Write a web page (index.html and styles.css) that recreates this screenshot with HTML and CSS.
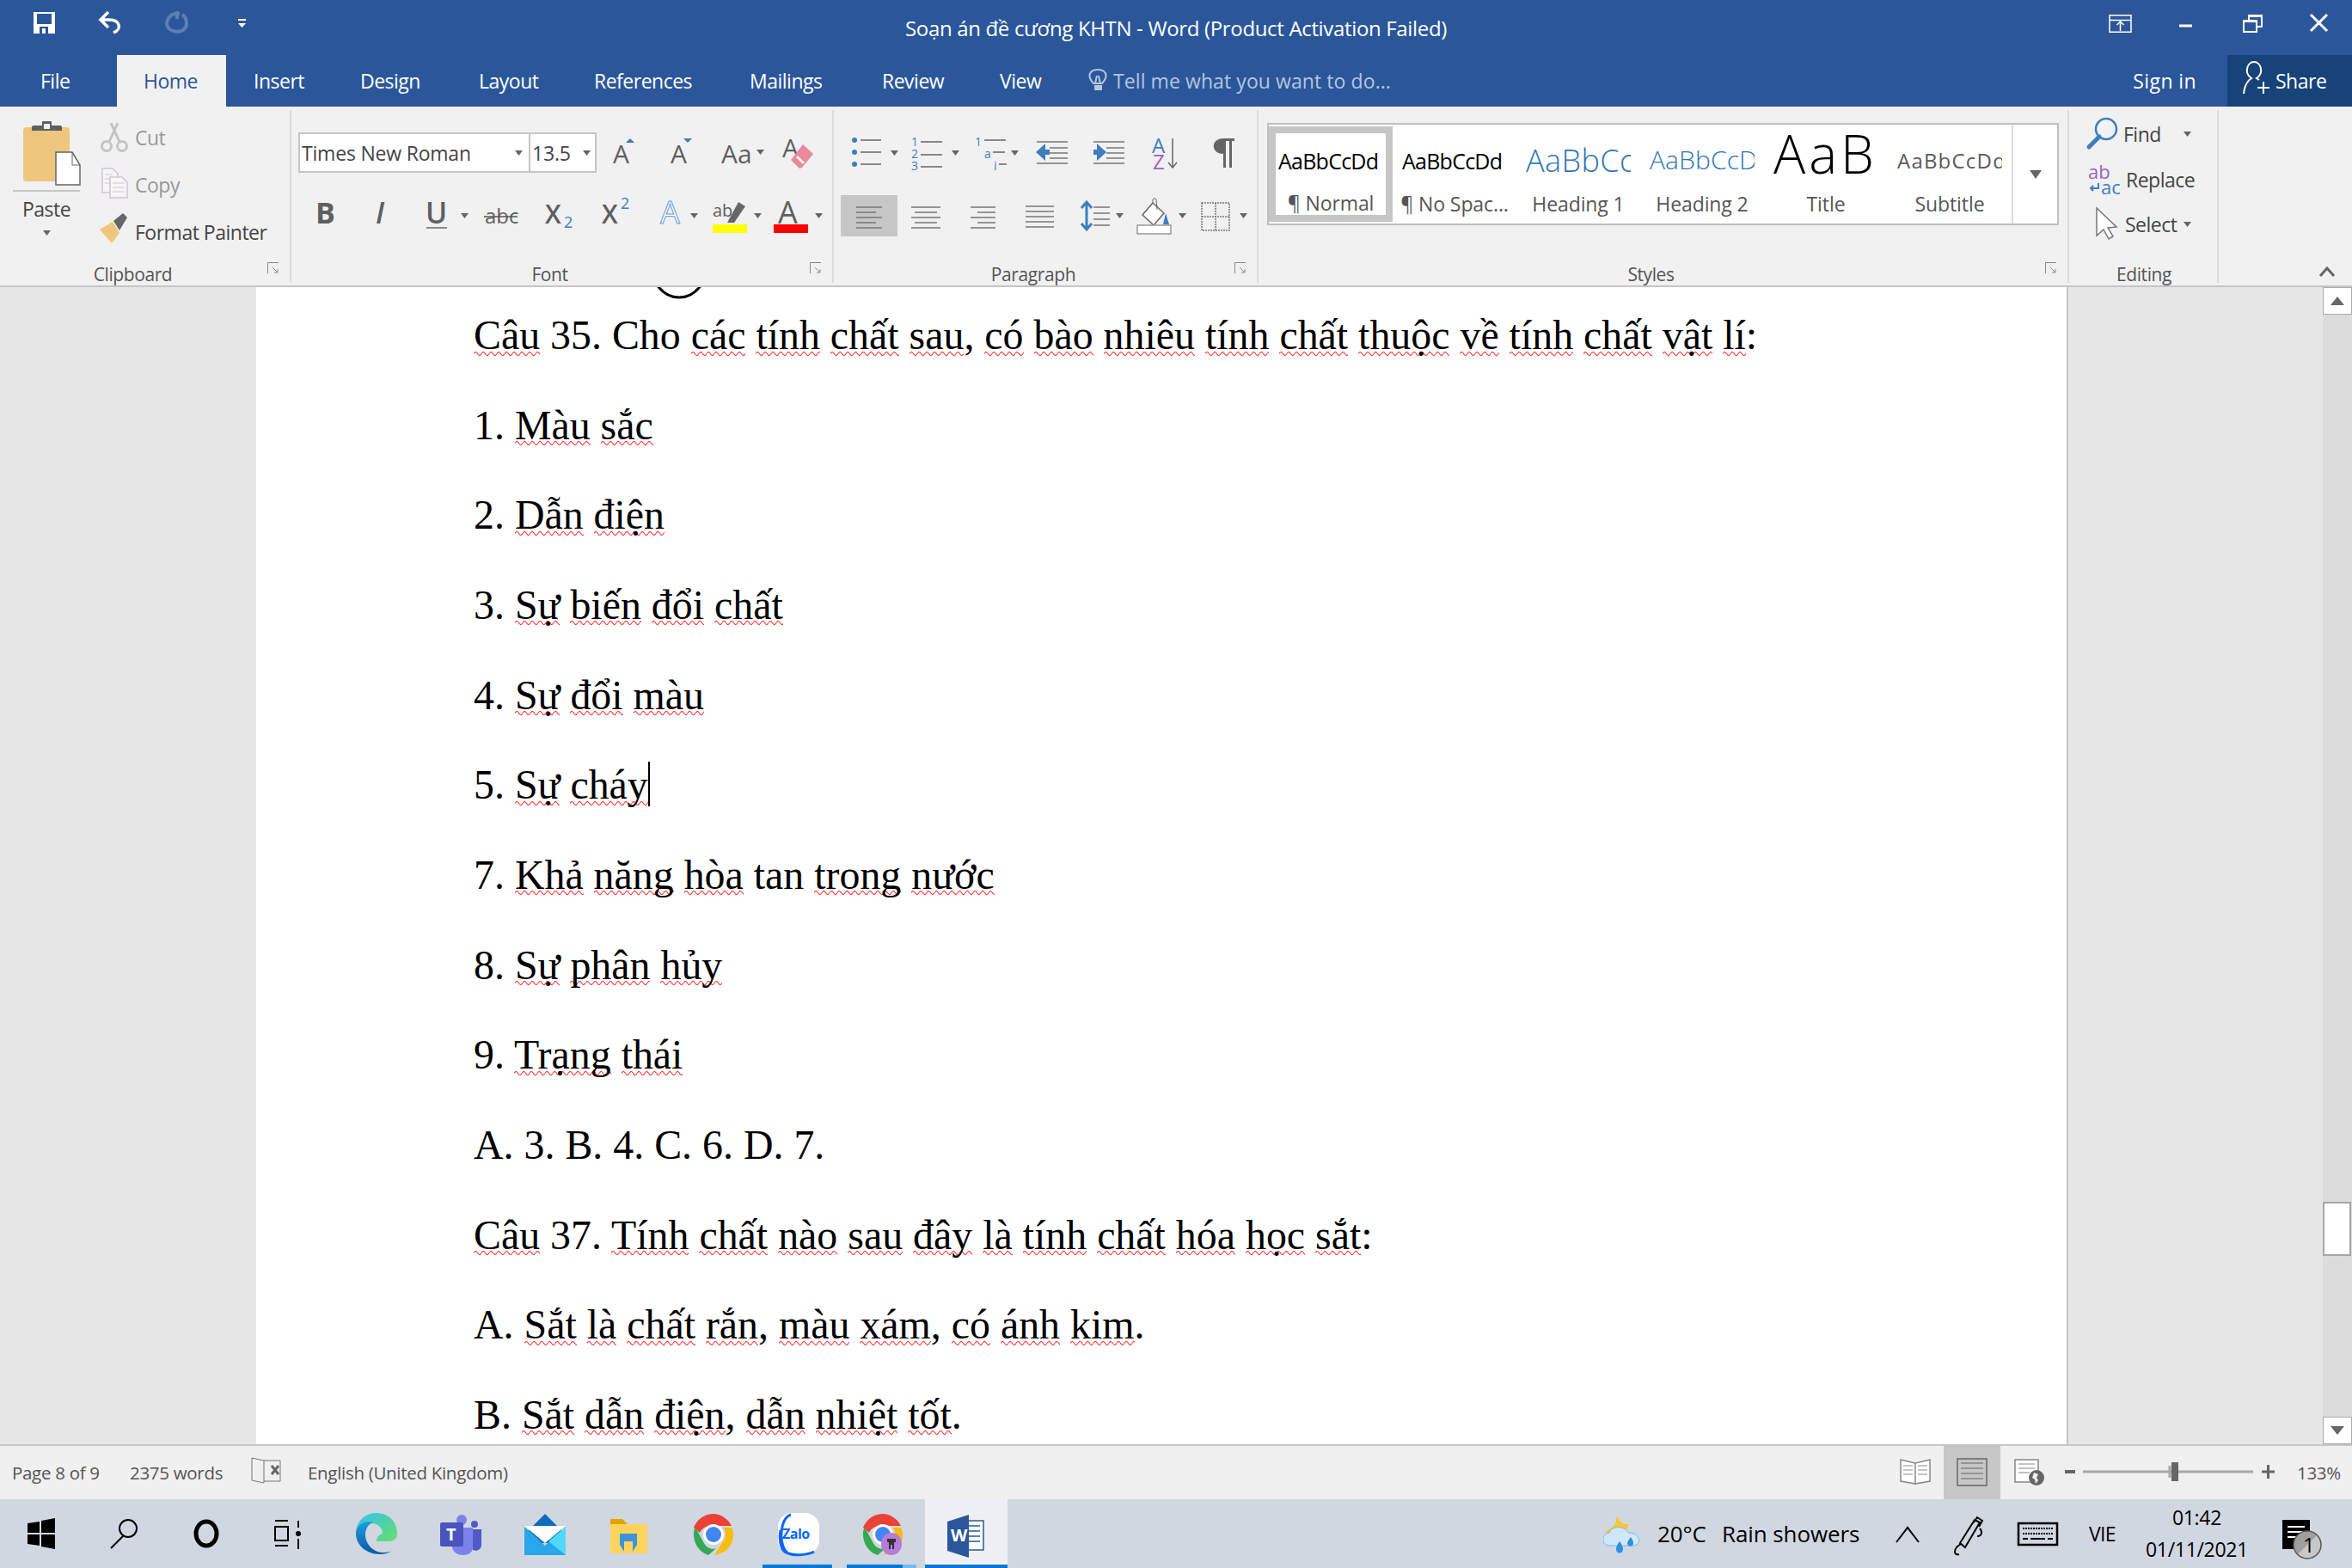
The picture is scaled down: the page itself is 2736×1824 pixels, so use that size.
FILE: index.html
```html
<!DOCTYPE html>
<html lang="vi">
<head>
<meta charset="utf-8">
<title>Soạn án đề cương KHTN - Word</title>
<link rel="stylesheet" href="styles.css">
</head>
<body>
<div class="app">
  <header class="titlebar">
    <div class="qat">
      <svg width="90" height="64" viewBox="0 0 90 64"><path fill="#fff" fill-rule="evenodd" d="M39 14h25v25H39zM43 16v12h17V16zM46 31v8h3v-6h4v6h3v-8z"/></svg>
      <svg width="64" height="64" viewBox="90 0 64 64"><path fill="none" stroke="#fff" stroke-width="3.5" d="M126 14l-9 9 9 9M118 23h9c13 0 15 11 5 15"/></svg>
      <svg width="78" height="64" viewBox="154 0 78 64"><path fill="none" stroke="#5b7fb7" stroke-width="4" d="M209 16c-13-2-15 10-15 11 0 12 23 14 23 0 0-5-2-8-5-10M206 13v9"/></svg>
      <svg width="60" height="64" viewBox="232 0 60 64"><path fill="#fff" d="M277 22h9v2h-9zM277 27h9l-4.500 5z"/></svg>
    </div>
    <div class="doc-title">Soạn án đề cương KHTN - Word (Product Activation Failed)</div>
    <div class="winctl">
      <svg width="82" height="64" viewBox="2432 0 82 64"><path fill="none" stroke="#fff" stroke-width="1.500" d="M2454 17.700h25v19.600h-25zM2454 23.500h25M2466.500 36v-11M2462.500 29l4-4 4 4"/></svg>
      <svg width="72" height="64" viewBox="2514 0 72 64"><path fill="#fff" d="M2535 28.500h15v3h-15z"/></svg>
      <svg width="72" height="64" viewBox="2586 0 72 64"><path fill="none" stroke="#fff" stroke-width="2" d="M2610 24h15v13h-15zM2616 23v-5h15v13h-5"/><path fill="#fff" d="M2610 23h15v3h-15zM2616 17h15v3h-15z"/></svg>
      <svg width="78" height="64" viewBox="2658 0 78 64"><path fill="none" stroke="#fff" stroke-width="3" d="M2688 17l19 19M2707 17l-19 19"/></svg>
    </div>
  </header>

  <nav class="tabs">
    <span class="tab tab-file">File</span>
    <span class="tab tab-home">Home</span>
    <span class="tab">Insert</span>
    <span class="tab">Design</span>
    <span class="tab">Layout</span>
    <span class="tab">References</span>
    <span class="tab">Mailings</span>
    <span class="tab">Review</span>
    <span class="tab">View</span>
    <span class="tell">
      <svg width="29" height="60" viewBox="1262 64 29 60"><path fill="none" stroke="#b5c6df" stroke-width="2" d="M1269 97c-9-10-3-16 5-16s14 6 5 16zM1271 97l2-9M1277 97l-2-9"/><path fill="#b5c6df" d="M1270 99h9v6h-9z"/></svg>
      <span class="tell-text">Tell me what you want to do...</span>
    </span>
    <span class="signin">Sign in</span>
    <span class="share">
      <svg width="56" height="60" viewBox="2591 64 56 60"><path fill="none" stroke="#fff" stroke-width="2" d="M2610 109c1-10 4-15 9-18-9-6-5-19 3-19s12 13 3 19l3 2M2626 102h14M2633 95v14"/></svg>
      <span>Share</span>
    </span>
  </nav>

  <section class="ribbon">
    <div class="group g-clip">
      <div class="body clip-body">
        <div class="paste">
          <svg width="108" height="108" viewBox="0 124 108 108">
            <rect x="27" y="148" width="54" height="63" rx="4" fill="#eec67e"/>
            <path fill="#5f5f5f" d="M37 152h35v-4q0-2-2-2H60v-4q0-1-1-1h-9q-1 0-1 1v4H39q-2 0-2 2z"/>
            <rect x="51" y="144" width="7" height="6" fill="#f1f1f1"/>
            <path fill="#fff" stroke="#666" stroke-width="1.500" d="M65 177h19l9 15v23H65z"/>
            <path fill="none" stroke="#666" d="M84 177v15h9"/>
            <path stroke="#c6c6c6" stroke-width="2" d="M15 222h78"/>
          </svg>
          <span class="paste-label">Paste</span>
          <svg width="108" height="14" viewBox="0 266 108 14"><path fill="#666" d="M50 270h9l-4.500 6z"/></svg>
        </div>
        <div class="clip-list">
          <div class="mini muted">
            <svg width="49" height="55" viewBox="108 134 49 55"><g fill="none" stroke="#c4c4c4" stroke-width="3"><circle cx="124" cy="170" r="5.500"/><circle cx="142" cy="170" r="5.500"/><path d="M127 165l10-22M139 165l-10-22"/></g></svg>
            <span>Cut</span>
          </div>
          <div class="mini muted">
            <svg width="49" height="55" viewBox="108 189 49 55"><g fill="#f6f6f6" stroke="#cfc6d2" stroke-width="1.500"><path d="M119 196h12l6 6v22h-18z"/><path d="M128 206h14l6 6v18h-20z"/></g><path stroke="#cfc6d2" d="M122 203h9M122 208h6M122 213h6M131 213h14M131 218h14M131 223h14"/></svg>
            <span>Copy</span>
          </div>
          <div class="mini">
            <svg width="49" height="55" viewBox="108 244 49 55"><path fill="#eec67e" d="M116 267l15-9 8 13-9 12z"/><path fill="#666" d="M132 257l11-9 5 5-9 15z"/></svg>
            <span>Format Painter</span>
          </div>
        </div>
      </div>
      <div class="glabel">Clipboard<svg class="launch" width="14" height="14" viewBox="0 0 14 14"><path fill="none" stroke="#888" d="M.5 13V.5H13M6 6l6 6M12 8v4H8"/></svg></div>
    </div>

    <div class="group g-font">
      <div class="body font-body">
        <div class="irow">
          <div class="fontbox">
            <div class="combo combo-name"><span>Times New Roman</span><svg width="12" height="8" viewBox="0 0 12 8"><path fill="#666" d="M1 1h9l-4.500 6z"/></svg></div>
            <div class="combo combo-size"><span>13.5</span><svg width="12" height="8" viewBox="0 0 12 8"><path fill="#666" d="M1 1h9l-4.500 6z"/></svg></div>
          </div>
          <svg width="65" height="47" viewBox="694 154 65 47"><text x="713" y="190" class="g g30">A</text><path fill="#3f7dbf" d="M733 161l-5 5h10z"/></svg>
          <svg width="64" height="47" viewBox="759 154 64 47"><text x="780" y="190" class="g g30">A</text><path fill="#3f7dbf" d="M795 161h10l-5 5z"/></svg>
          <svg width="76" height="47" viewBox="823 154 76 47"><text x="839" y="190" class="g g30">Aa</text><path fill="#666" d="M880 174h9l-4.500 6z"/></svg>
          <svg width="60" height="47" viewBox="899 154 60 47"><text x="910" y="183" class="g g30">A</text><path fill="#e88a9b" d="M934 168l12 11-13 16-3 1-10-10z"/><path fill="#f1f1f1" d="M926 183l2-2 8 8-2 2z"/></svg>
        </div>
        <div class="irow irow2">
          <svg width="60" height="50" viewBox="347 227 60 50"><text x="367" y="260" class="g g34 bold">B</text></svg>
          <svg width="65" height="50" viewBox="407 227 65 50"><text x="437" y="260" class="g g34 ital semi">I</text></svg>
          <svg width="82" height="50" viewBox="472 227 82 50"><text x="495" y="260" class="g g34 semi">U</text><path stroke="#666" stroke-width="1.500" d="M496 265h24"/><path fill="#666" d="M536 248h9l-4.500 6z"/></svg>
          <svg width="70" height="50" viewBox="554 227 70 50"><text x="564" y="260" class="g g24">abc</text><path stroke="#555" stroke-width="1.500" d="M563 252h39"/></svg>
          <svg width="66" height="50" viewBox="624 227 66 50"><text x="634" y="260" class="g g30 semi">X</text><text x="656" y="265" class="g g18 blue">2</text></svg>
          <svg width="65" height="50" viewBox="690 227 65 50"><text x="700" y="260" class="g g30 semi">X</text><text x="722" y="243" class="g g18 blue">2</text></svg>
          <svg width="64" height="50" viewBox="755 227 64 50"><text x="768" y="260" class="g g36 outline">A</text><path fill="#666" d="M803 248h9l-4.500 6z"/></svg>
          <svg width="70" height="50" viewBox="819 227 70 50"><text x="829" y="252" class="g g20">ab</text><path fill="#666" d="M859 235l8 5-13 19h-8z"/><rect x="829" y="261" width="40" height="10" fill="#ff0"/><path fill="#666" d="M877 248h9l-4.500 6z"/></svg>
          <svg width="70" height="50" viewBox="889 227 70 50"><text x="905" y="260" class="g g36">A</text><rect x="900" y="261" width="40" height="10" fill="#f00"/><path fill="#666" d="M948 248h9l-4.500 6z"/></svg>
        </div>
      </div>
      <div class="glabel">Font<svg class="launch" width="14" height="14" viewBox="0 0 14 14"><path fill="none" stroke="#888" d="M.5 13V.5H13M6 6l6 6M12 8v4H8"/></svg></div>
    </div>

    <div class="group g-para">
      <div class="body para-body">
        <div class="irow">
          <svg width="81" height="47" viewBox="970 154 81 47"><g fill="#3f7dbf"><circle cx="994" cy="163" r="3"/><circle cx="994" cy="177" r="3"/><circle cx="994" cy="191" r="3"/></g><path stroke="#666" stroke-width="1.500" d="M1001 163h24M1001 177h24M1001 191h24"/><path fill="#666" d="M1036 175h9l-4.500 6z"/></svg>
          <svg width="70" height="47" viewBox="1051 154 70 47"><text x="1060" y="170" class="g g14 blue">1</text><text x="1060" y="184" class="g g14 blue">2</text><text x="1060" y="198" class="g g14 blue">3</text><path stroke="#666" stroke-width="1.500" d="M1071 165h25M1071 180h25M1071 194h25"/><path fill="#666" d="M1107 175h9l-4.500 6z"/></svg>
          <svg width="67" height="47" viewBox="1121 154 67 47"><text x="1134" y="170" class="g g14 blue">1</text><text x="1145" y="184" class="g g14 blue">a</text><text x="1156" y="198" class="g g14 blue">i</text><path stroke="#666" stroke-width="1.500" d="M1145 163h25M1155 177h14M1162 191h9"/><path fill="#666" d="M1176 175h9l-4.500 6z"/></svg>
          <svg width="62" height="47" viewBox="1188 154 62 47"><path stroke="#777" stroke-width="1.500" d="M1206 165h36M1221 172h21M1221 178h21M1221 184h21M1206 190h36"/><path fill="#3f7dbf" d="M1205 177l11-10v7h5v6h-5v7z"/></svg>
          <svg width="66" height="47" viewBox="1250 154 66 47"><path stroke="#777" stroke-width="1.500" d="M1272 165h36M1287 172h21M1287 178h21M1287 184h21M1272 190h36"/><path fill="#3f7dbf" d="M1287 177l-11-10v7h-4v6h4v7z"/></svg>
          <svg width="62" height="47" viewBox="1316 154 62 47"><text x="1340" y="178" class="g g24 blue">A</text><text x="1341" y="197" class="g g24 purple">Z</text><path fill="none" stroke="#666" stroke-width="1.500" d="M1364 161v34M1359 189l5 6 5-6"/></svg>
          <svg width="85" height="47" viewBox="1378 154 85 47"><path fill="#666" d="M1423 161h13v3h-3v31h-3v-31h-4v31h-3z"/><path fill="#666" d="M1423 161c-15 0-15 18 0 18z"/></svg>
        </div>
        <div class="irow irow2b">
          <svg class="pick" width="66" height="48" viewBox="978 227 66 48"><path stroke="#777" stroke-width="1.500" d="M996 241h30M996 247h23M996 253h30M996 259h23M996 265h30"/></svg>
          <svg width="68" height="48" viewBox="1044 227 68 48"><path stroke="#777" stroke-width="1.500" d="M1060 241h34M1064 247h26M1060 253h34M1064 259h26M1060 265h34"/></svg>
          <svg width="64" height="48" viewBox="1112 227 64 48"><path stroke="#777" stroke-width="1.500" d="M1129 241h29M1137 247h21M1129 253h29M1137 259h21M1129 265h29"/></svg>
          <svg width="64" height="48" viewBox="1176 227 64 48"><path stroke="#777" stroke-width="1.500" d="M1193 240h33M1193 246h33M1193 252h33M1193 258h33M1193 264h33"/></svg>
          <svg width="76" height="48" viewBox="1240 227 76 48"><path stroke="#3f7dbf" stroke-width="3" fill="none" d="M1264 236v30M1258 242l6-7 6 7M1258 260l6 7 6-7"/><path stroke="#777" stroke-width="1.500" d="M1272 241h19M1272 248h19M1272 255h19M1272 262h19"/><path fill="#666" d="M1298 248h9l-4.500 6z"/></svg>
          <svg width="74" height="48" viewBox="1316 227 74 48"><path fill="#fff" stroke="#666" stroke-width="1.500" d="M1341 236l-12 14 13 12 12-14z"/><path fill="none" stroke="#666" d="M1341 236v-4q2-3 4 0l1 12"/><path fill="#3f7dbf" d="M1356 248l4 13h-7z"/><rect x="1323" y="262" width="39" height="10" fill="#fff" stroke="#999" stroke-width="1.500"/><path fill="#666" d="M1371 248h9l-4.500 6z"/></svg>
          <svg width="73" height="48" viewBox="1390 227 73 48"><path fill="none" stroke="#777" stroke-width="1.500" stroke-dasharray="2 1" d="M1398 236h32v32h-32zM1398 252h32M1414 236v32"/><path fill="#666" d="M1442 248h9l-4.500 6z"/></svg>
        </div>
      </div>
      <div class="glabel">Paragraph<svg class="launch" width="14" height="14" viewBox="0 0 14 14"><path fill="none" stroke="#888" d="M.5 13V.5H13M6 6l6 6M12 8v4H8"/></svg></div>
    </div>

    <div class="group g-styles">
      <div class="body styles-body">
        <div class="gallery">
          <div class="style style-on"><div class="sample s-norm">AaBbCcDd</div><div class="slabel">¶ Normal</div></div>
          <div class="style"><div class="sample s-norm">AaBbCcDd</div><div class="slabel">¶ No Spac...</div></div>
          <div class="style"><div class="sample s-h1">AaBbCcDd</div><div class="slabel">Heading 1</div></div>
          <div class="style"><div class="sample s-h2">AaBbCcDd</div><div class="slabel">Heading 2</div></div>
          <div class="style"><div class="sample s-title">AaBbCcDd</div><div class="slabel">Title</div></div>
          <div class="style"><div class="sample s-sub">AaBbCcDd</div><div class="slabel">Subtitle</div></div>
          <div class="gmore"><svg width="14" height="12" viewBox="0 0 14 12"><path fill="#666" d="M0 1h14l-7 10z"/></svg></div>
        </div>
      </div>
      <div class="glabel">Styles<svg class="launch" width="14" height="14" viewBox="0 0 14 14"><path fill="none" stroke="#888" d="M.5 13V.5H13M6 6l6 6M12 8v4H8"/></svg></div>
    </div>

    <div class="group g-edit">
      <div class="body edit-body">
        <div class="mini edit-row">
          <svg width="63" height="52" viewBox="2407 131 63 52"><circle cx="2450" cy="151" r="12" fill="none" stroke="#3f7dbf" stroke-width="2.500"/><path stroke="#3f7dbf" stroke-width="5" stroke-linecap="round" d="M2442 160l-12 12"/></svg>
          <span>Find</span>
          <svg class="edit-arrow" width="10" height="8" viewBox="0 0 10 8"><path fill="#666" d="M0 1h9L4.500 7z"/></svg>
        </div>
        <div class="mini edit-row">
          <svg width="66" height="52" viewBox="2407 183 66 52"><text x="2429" y="208" class="g g22 purple">ab</text><text x="2444" y="226" class="g g22 blue">ac</text><path fill="none" stroke="#3f7dbf" stroke-width="2" d="M2441 213v6h-9M2435 216l-3 3 3 3"/></svg>
          <span>Replace</span>
        </div>
        <div class="mini edit-row">
          <svg width="65" height="52" viewBox="2407 236 65 52"><path fill="#fff" stroke="#777" stroke-width="1.500" d="M2439 243v32l8-7 6 11 5-3-6-10 10-1z"/></svg>
          <span>Select</span>
          <svg class="select-arrow" width="10" height="8" viewBox="0 0 10 8"><path fill="#666" d="M0 1h9L4.500 7z"/></svg>
        </div>
      </div>
      <div class="glabel glabel-plain">Editing</div>
    </div>

    <div class="collapse"><svg width="20" height="14" viewBox="0 0 20 14"><path fill="none" stroke="#666" stroke-width="3" d="M2 12l8-9 8 9"/></svg></div>
  </section>

  <main class="workspace">
    <div class="gutter gutter-left"></div>
    <article class="page">
      <svg class="inline-shape" width="90" height="14" viewBox="0 0 90 14"><ellipse cx="45" cy="-30" rx="34" ry="42" fill="none" stroke="#000" stroke-width="3"/></svg>
      <p><span class="sp">Câu</span> 35. Cho <span class="sp">các</span> <span class="sp">tính</span> <span class="sp">chất</span> <span class="sp">sau</span>, <span class="sp">có</span> <span class="sp">bào</span> <span class="sp">nhiêu</span> <span class="sp">tính</span> <span class="sp">chất</span> <span class="sp">thuộc</span> <span class="sp">về</span> <span class="sp">tính</span> <span class="sp">chất</span> <span class="sp">vật</span> <span class="sp">lí</span>:</p>
      <p>1. <span class="sp">Màu</span> <span class="sp">sắc</span></p>
      <p>2. <span class="sp">Dẫn</span> <span class="sp">điện</span></p>
      <p>3. <span class="sp">Sự</span> <span class="sp">biến</span> <span class="sp">đổi</span> <span class="sp">chất</span></p>
      <p>4. <span class="sp">Sự</span> <span class="sp">đổi</span> <span class="sp">màu</span></p>
      <p>5. <span class="sp">Sự</span> <span class="sp">cháy</span><span class="caret"></span></p>
      <p>7. <span class="sp">Khả</span> <span class="sp">năng</span> <span class="sp">hòa</span> tan <span class="sp">trong</span> <span class="sp">nước</span></p>
      <p>8. <span class="sp">Sự</span> <span class="sp">phân</span> <span class="sp">hủy</span></p>
      <p>9. <span class="sp">Trạng</span> <span class="sp">thái</span></p>
      <p>A. 3. B. 4. C. 6. D. 7.</p>
      <p><span class="sp">Câu</span> 37. <span class="sp">Tính</span> <span class="sp">chất</span> <span class="sp">nào</span> <span class="sp">sau</span> <span class="sp">đây</span> <span class="sp">là</span> <span class="sp">tính</span> <span class="sp">chất</span> <span class="sp">hóa</span> <span class="sp">học</span> <span class="sp">sắt</span>:</p>
      <p>A. <span class="sp">Sắt</span> <span class="sp">là</span> <span class="sp">chất</span> <span class="sp">rắn</span>, <span class="sp">màu</span> <span class="sp">xám</span>, <span class="sp">có</span> <span class="sp">ánh</span> <span class="sp">kim</span>.</p>
      <p>B. <span class="sp">Sắt</span> <span class="sp">dẫn</span> <span class="sp">điện</span>, <span class="sp">dẫn</span> <span class="sp">nhiệt</span> <span class="sp">tốt</span>.</p>
    </article>
    <div class="gutter gutter-right"></div>
    <aside class="scrollbar">
      <div class="sbtn"><svg width="18" height="12" viewBox="0 0 18 12"><path fill="#666" d="M9 1l8 10H1z"/></svg></div>
      <div class="strack"><div class="sthumb"></div></div>
      <div class="sbtn"><svg width="18" height="12" viewBox="0 0 18 12"><path fill="#666" d="M1 1h16L9 11z"/></svg></div>
    </aside>
  </main>

  <footer class="status">
    <span class="st st-page">Page 8 of 9</span>
    <span class="st st-words">2375 words</span>
    <svg width="50" height="62" viewBox="283 1682 50 62"><path fill="none" stroke="#777" d="M293 1696l14 3v26l-14-3zM307 1699h19v24h-19"/><path stroke="#666" stroke-width="3" d="M316 1705l8 10M324 1705l-8 10"/></svg>
    <span class="st st-lang">English (United Kingdom)</span>
    <div class="views">
      <svg width="64" height="62" viewBox="2197 1682 64 62"><path fill="#fff" stroke="#888" stroke-width="1.500" d="M2228 1702v24l-17-3v-25zM2228 1702v24l17-3v-25z"/><path stroke="#888" d="M2214 1705h11M2214 1710h11M2214 1715h11M2231 1705h11M2231 1710h11M2231 1715h11"/></svg>
      <svg class="view-on" width="66" height="62" viewBox="2261 1682 66 62"><rect x="2277" y="1697" width="34" height="31" fill="none" stroke="#666" stroke-width="1.500"/><path stroke="#666" d="M2281 1702h26M2281 1708h26M2281 1714h26M2281 1720h26"/></svg>
      <svg width="63" height="62" viewBox="2327 1682 63 62"><path fill="#fff" stroke="#888" stroke-width="1.500" d="M2344 1698h27v26h-27z"/><path stroke="#888" d="M2348 1703h19M2348 1708h19M2348 1713h13"/><circle cx="2369" cy="1719" r="9" fill="#666"/><path fill="#f0f0f0" d="M2366 1713l5 2-2 4 2 3-3 4-1-5-3-2z"/></svg>
      <svg width="270" height="62" viewBox="2390 1682 270 62"><path fill="#666" d="M2402 1710h12v4h-12zM2631 1710.500h15v3h-15zM2637 1704h3v16h-3z"/><path stroke="#a8a8a8" stroke-width="3" d="M2423 1712h198M2524 1705v14"/><rect x="2526" y="1701" width="8" height="22" fill="#666"/></svg>
      <span class="st st-zoom">133%</span>
    </div>
  </footer>

  <footer class="taskbar">
    <svg width="96" height="80" viewBox="0 1744 96 80"><path fill="#000" d="M32 1772l14-2v13H32zM48 1769l16-3v17H48zM32 1785h14v13l-14-2zM48 1785h16v17l-16-3z"/></svg>
    <svg width="96" height="80" viewBox="96 1744 96 80"><circle cx="149" cy="1778" r="10" fill="none" stroke="#000" stroke-width="2"/><path stroke="#000" stroke-width="2" d="M143 1787l-14 14"/></svg>
    <svg width="96" height="80" viewBox="192 1744 96 80"><ellipse cx="240" cy="1784" rx="12" ry="14" fill="none" stroke="#000" stroke-width="5"/></svg>
    <svg width="96" height="80" viewBox="288 1744 96 80"><path fill="none" stroke="#000" stroke-width="2" d="M320 1769h15M320 1776h15v16h-15zM320 1798h15M347 1769v8M347 1790v12"/><circle cx="347" cy="1784" r="3"/></svg>
    <svg width="102" height="80" viewBox="384 1744 102 80">
      <defs><linearGradient id="edgeA" x1="0" y1="0" x2="1" y2="1"><stop offset="0" stop-color="#35c1f1"/><stop offset="1" stop-color="#66e06a"/></linearGradient><linearGradient id="edgeB" x1="0" y1="0" x2="0" y2="1"><stop offset="0" stop-color="#1b9de2"/><stop offset="1" stop-color="#0c59a4"/></linearGradient></defs>
      <path fill="url(#edgeA)" d="M414 1784c0-14 10-24 24-24 15 0 24 11 24 24 0 6-4 9-10 9h-14c0-5 3-8 7-9 0-7-6-12-13-12-8 0-18 5-18 12z"/>
      <path fill="url(#edgeB)" d="M414 1784c0-9 8-14 16-14 4 0 4 1 4 1-6 2-9 8-9 14 0 11 9 21 21 21 5 0 9-1 11-3-5 4-10 5-15 5-16 0-28-11-28-24z"/>
    </svg>
    <svg width="99" height="80" viewBox="486 1744 99 80">
      <circle cx="537" cy="1768" r="6" fill="#7b83eb"/><circle cx="552" cy="1773" r="4" fill="#5059c9"/>
      <path fill="#5059c9" d="M544 1779h16v18c0 6-6 8-10 6z"/><path fill="#7b83eb" d="M526 1777h24v23c0 12-22 12-24 0z"/>
      <rect x="512" y="1771" width="27" height="28" rx="2" fill="#4b53bc"/><text x="519" y="1792" class="tk-t">T</text>
    </svg>
    <svg width="98" height="80" viewBox="585 1744 98 80">
      <path fill="#0f6cbd" d="M634 1761l24 24v10h-48v-10z"/><path fill="#fff" d="M610 1775h48l-24 20z"/><path fill="#28a8ea" d="M610 1776l24 22 24-22v33h-48z"/><path fill="#50d9ff" d="M658 1776v33l-20-16z"/>
    </svg>
    <svg width="98" height="80" viewBox="683 1744 98 80">
      <path fill="#e2a300" d="M710 1767h14l6 6v12h-20z"/><path fill="#ffd45c" d="M710 1773h43v34h-43z"/><path fill="#3c94dc" d="M721 1797v-13h20v13l-5 8v-12h-10v12z"/>
    </svg>
    <svg width="100" height="80" viewBox="781 1744 100 80">
      <path fill="#ea4335" d="M830 1761c9 0 18 7 21 14h-23c-7 0-12 3-14 8l-7-6c4-10 13-16 23-16z"/><path fill="#34a853" d="M807 1785c0-3 0-6 2-8l11 20c3 4 9 6 13 4l-9 8c-10-3-17-13-17-24z"/><path fill="#fbbc05" d="M853 1785c0 12-7 21-22 24l12-19c2-5 1-10-2-13h10c1 2 2 5 2 8z"/><circle cx="830" cy="1785" r="12" fill="#fff"/><circle cx="830" cy="1785" r="9" fill="#4285f4"/>
    </svg>
    <svg width="95" height="80" viewBox="881 1744 95 80">
      <rect x="905" y="1760" width="48" height="48" rx="16" fill="#fff"/><path fill="none" stroke="#0068ff" stroke-width="3" d="M920 1762c-14 4-14 38-4 44M908 1780c-2 10 0 26 9 27 8 3 22 2 30-2"/><text x="910" y="1790" class="tk-z">Zalo</text>
      <rect x="887" y="1820" width="81" height="4" fill="#0078d7"/>
    </svg>
    <svg width="100" height="80" viewBox="976 1744 100 80">
      <path fill="#ea4335" d="M1027 1761c9 0 18 7 21 14h-23c-7 0-12 3-14 8l-7-6c4-10 13-16 23-16z"/><path fill="#34a853" d="M1004 1785c0-3 0-6 2-8l11 20c3 4 9 6 13 4l-9 8c-10-3-17-13-17-24z"/><path fill="#fbbc05" d="M1050 1785c0 12-7 21-22 24l12-19c2-5 1-10-2-13h10c1 2 2 5 2 8z"/><circle cx="1027" cy="1785" r="12" fill="#fff"/><circle cx="1027" cy="1785" r="9" fill="#4285f4"/>
      <ellipse cx="1037" cy="1796" rx="12" ry="13" fill="#b67cd8"/><path fill="#333" d="M1032 1790h10v4h-2v8h-2v-5h-2v5h-2v-8h-2z"/><rect x="985" y="1820" width="65" height="4" fill="#0078d7"/><rect x="1050" y="1820" width="16" height="4" fill="#76b9ed"/>
    </svg>
    <svg class="task-on" width="96" height="80" viewBox="1076 1744 96 80">
      <path fill="#fff" stroke="#2b579a" stroke-width="1.500" d="M1118 1769h26v34h-26z"/><path stroke="#2b579a" stroke-width="1.500" d="M1124 1775h16M1124 1781h16M1124 1787h16M1124 1793h16"/><path fill="#2b579a" d="M1102 1770l25-8v50l-25-8z"/><text x="1106" y="1793" class="tk-w">W</text>
      <rect x="1076" y="1820" width="96" height="4" fill="#0078d7"/>
    </svg>
    <div class="tray">
      <svg width="63" height="80" viewBox="1865 1744 63 80"><path fill="#f7c52e" d="M1881 1762c-1 12-3 14-14 20 8 6 26 2 28-9-7 1-13-3-14-11z"/><path fill="#cfe7fb" stroke="#7db7e8" d="M1872 1798c-10-1-9-14 0-15 3-9 19-8 22 0 15 0 17 15 5 15z"/><path fill="#2f8fdc" d="M1884 1793c3 4 4 7 4 9 0 6-8 6-8 0 0-2 1-5 4-9zM1897 1788c2 3 3 5 3 7 0 5-7 5-7 0 0-2 2-4 4-7z"/></svg>
      <span class="temp">20°C</span>
      <span class="wx">Rain showers</span>
      <svg width="79" height="80" viewBox="2179 1744 79 80"><path fill="none" stroke="#000" stroke-width="2" d="M2206 1794l13-17 13 17"/></svg>
      <svg width="68" height="80" viewBox="2258 1744 68 80"><path fill="none" stroke="#000" stroke-width="2" d="M2286 1800l-6-5 17-27 6 3zM2295 1772l5-7 6 4-4 7M2281 1796c-10 6-8 14-2 12M2303 1778c3 3 3 9-3 9"/></svg>
      <svg width="86" height="80" viewBox="2326 1744 86 80"><rect x="2348" y="1772" width="45" height="25" fill="none" stroke="#000" stroke-width="2.500"/><path stroke="#000" stroke-width="2" stroke-dasharray="2 1" d="M2353 1778h35M2353 1784h35"/><path stroke="#000" stroke-width="2" d="M2353 1790h6M2362 1790h17M2382 1790h6"/></svg>
      <span class="lang">VIE</span>
      <div class="clock"><span>01:42</span><span>01/11/2021</span></div>
      <svg width="120" height="80" viewBox="2616 1744 120 80"><path fill="#000" d="M2655 1768h32v34h-32z"/><path stroke="#fff" stroke-width="2" d="M2661 1776h20M2661 1782h20M2661 1788h14"/><circle cx="2684" cy="1797" r="16" fill="#c7c7c7" stroke="#555" stroke-width="1.500"/><path fill="#555" d="M2673 1786a16 16 0 0 1 22 0l-22 22a16 16 0 0 1 0-22z" opacity=".35"/><text x="2679" y="1806" class="tk-n">1</text></svg>
    </div>
  </footer>
</div>
</body>
</html>
```
FILE: styles.css
```css
* { box-sizing: border-box; }
html { height: 1824px; overflow: hidden; }
html, body { margin: 0; padding: 0; }
body { width: 2736px; height: 1824px; overflow: hidden; font-family: "Open Sans", "Noto Sans", sans-serif; color: #444; }
svg { display: block; flex: none; }
.app { display: flex; flex-direction: column; height: 1824px; overflow: hidden; }

.titlebar { height: 64px; flex: none; background: #2b579a; color: #fff; display: grid; grid-template-columns: 1fr auto 1fr; align-items: center; }
.qat { display: flex; }
.doc-title { font-size: 24px; letter-spacing: -.34px; white-space: nowrap; }
.winctl { display: flex; justify-content: flex-end; }

.tabs { height: 60px; flex: none; background: #2b579a; color: #fff; font-size: 23px; letter-spacing: -.5px; display: grid; grid-template-columns: 136px 127px 124px 138px 134px 181px 154px 137px 134px 1fr auto auto; align-items: center; }
.tab { padding-left: 32px; line-height: 60px; }
.tab-file { padding-left: 47px; }
.tab-home { background: #f1f1f1; color: #2b579a; padding-left: 31px; }
.tell { display: flex; align-items: center; color: #b5c6df; gap: 1px; }
.tell-text { letter-spacing: .08px; }
.signin { margin-right: 36px; letter-spacing: .4px; }
.share { width: 145px; height: 60px; background: #174378; display: flex; align-items: center; }

.ribbon { height: 210px; flex: none; background: #f1f1f1; border-bottom: 2px solid #c6c6c6; display: flex; font-size: 23px; letter-spacing: -.5px; }
.group { flex: none; display: flex; flex-direction: column; height: 208px; position: relative; }
.group::after { content: ""; position: absolute; right: 0; top: 4px; bottom: 3px; width: 2px; background: #dcdcdc; }
.g-clip { width: 339px; }
.g-font { width: 631px; }
.g-para { width: 494px; }
.g-styles { width: 943px; }
.g-edit { width: 174px; }
.body { flex: 1; min-height: 0; }
.glabel { height: 34px; line-height: 42px; padding-right: 30px; text-align: center; font-size: 21px; letter-spacing: -.4px; color: #555; position: relative; }
.glabel-plain { padding-right: 0; }
.launch { position: absolute; right: 14px; top: 7px; }

.clip-body { display: flex; }
.paste { width: 108px; flex: none; display: flex; flex-direction: column; }
.paste-label { text-align: center; margin: -6px 0 4px 0; line-height: 34px; color: #444; }
.clip-list { padding-top: 8px; }
.mini { display: flex; align-items: center; height: 55px; white-space: nowrap; }
.mini svg { margin-top: 2px; align-self: flex-start; }
.edit-row svg { margin-top: 0; align-self: center; }
.muted { color: #999; }

.font-body { padding: 30px 0 0 8px; }
.irow { display: flex; align-items: center; }
.irow2 { margin-top: 26px; }
.fontbox { display: flex; width: 347px; height: 47px; background: #fff; border: 2px solid #c6c6c6; flex: none; letter-spacing: -.2px; }
.combo { display: flex; align-items: center; justify-content: space-between; padding: 0 3px 0 2px; }
.combo-name { width: 268px; border-right: 2px solid #c6c6c6; padding-right: 5px; }
.combo-size { flex: 1; }
.para-body { padding-top: 30px; }
.irow2b { margin-top: 26px; margin-left: 8px; }
.pick { background: #c6c6c6; }

.styles-body { padding: 19px 0 0 10px; }
.gallery { width: 921px; height: 119px; background: #fff; border: 2px solid #c0c0c0; display: flex; }
.style { width: 144px; flex: none; display: flex; flex-direction: column; align-items: stretch; overflow: hidden; }
.style-on { width: 144px; margin: 2px 0; border: 8px solid #c6c6c6; }
.sample { height: 72px; line-height: 84px; margin: 0 11px; white-space: nowrap; overflow: hidden; color: #000; }
.style-on .sample { height: 62px; line-height: 64px; margin: 0 3px; }
.s-norm { font-size: 25px; letter-spacing: -.75px; }
.s-h1 { font-size: 36px; color: #2e74b5; font-weight: 300; letter-spacing: .4px; }
.s-h2 { font-size: 30px; color: #2e74b5; font-weight: 300; letter-spacing: .1px; line-height: 82px; }
.s-title { font-size: 62px; font-weight: 300; letter-spacing: 4px; line-height: 66px; }
.s-sub { font-size: 24px; color: #5a5a5a; letter-spacing: 1.200px; }
.slabel { text-align: center; height: 34px; line-height: 40px; white-space: nowrap; color: #555; letter-spacing: -.1px; }
.gmore { flex: 1; border-left: 2px solid #dcdcdc; display: flex; align-items: center; justify-content: center; }

.edit-body { padding-top: 6px; }
.edit-row { height: 52.500px; }
.edit-arrow { margin-left: 26px; }
.select-arrow { margin-left: 8px; }
.collapse { flex: 1; display: flex; justify-content: flex-end; align-items: flex-end; padding: 0 19px 9px 0; }

.workspace { flex: 1; min-height: 0; display: flex; background: #e6e6e6; }
.gutter { flex: none; }
.gutter-left { width: 298px; }
.gutter-right { flex: 1; border-left: 2px solid #c6c6c6; }
.page { width: 2106px; flex: none; background: #fff; padding: 4px 0 0 253px; overflow: hidden; position: relative; font-family: "Liberation Serif", "Times New Roman", serif; font-size: 47.880px; color: #000; }
.page p { margin: 0; height: 104.670px; line-height: 104.670px; white-space: nowrap; }
.inline-shape { position: absolute; left: 447px; top: 0; }
.sp { background: url("data:image/svg+xml,%3Csvg xmlns='http://www.w3.org/2000/svg' width='9' height='5'%3E%3Cpath d='M0 2.500Q2.250-1.500 4.500 2.500T9 2.500' fill='none' stroke='%23f33' stroke-width='1.100'/%3E%3C/svg%3E") repeat-x left 0 bottom 2.500px / 9px 5px; }
.caret { display: inline-block; width: 2px; height: 52px; background: #000; vertical-align: -9px; }

.scrollbar { width: 34px; flex: none; display: flex; flex-direction: column; background: #dcdcdc; }
.sbtn { height: 32px; flex: none; background: #fff; border: 1px solid #ababab; display: flex; align-items: center; justify-content: center; }
.strack { flex: 1; padding-top: 1032px; }
.sthumb { height: 63px; background: #fff; border: 2px solid #a6a6a6; width: 33px; }

.status { height: 64px; flex: none; background: #f0f0f0; border-top: 2px solid #c6c6c6; display: flex; align-items: center; font-size: 20.500px; letter-spacing: -.3px; color: #555; }
.st { white-space: nowrap; }
.st-page { margin-left: 14px; width: 137px; }
.st-words { width: 132px; }
.st-lang { margin-left: 25px; }
.views { margin-left: auto; display: flex; align-items: center; }
.view-on { background: #c6c6c6; }
.st-zoom { margin-left: 12px; width: 64px; }

.taskbar { height: 80px; flex: none; background: #d0d7e1; display: flex; align-items: center; color: #000; font-size: 26px; letter-spacing: -.1px; }
.task-on { background: #eef0f5; }
.tray { margin-left: auto; display: flex; align-items: center; height: 80px; }
.temp { width: 75px; white-space: nowrap; }
.wx { width: 176px; white-space: nowrap; }
.lang { width: 83px; padding-left: 18px; font-size: 23px; letter-spacing: -.7px; }
.clock { width: 121px; display: flex; flex-direction: column; align-items: center; font-size: 23px; letter-spacing: -.3px; line-height: 37px; }

.g { font-family: "Open Sans", sans-serif; fill: #5f5f5f; letter-spacing: 0; }
.bold { font-weight: 700; }
.semi { font-weight: 600; }
.ital { font-style: italic; }
.g14 { font-size: 14px; }
.g18 { font-size: 18px; }
.g20 { font-size: 20px; }
.g22 { font-size: 22px; }
.g24 { font-size: 24px; }
.g30 { font-size: 30px; }
.g34 { font-size: 34px; }
.g36 { font-size: 36px; }
.blue { fill: #3f7dbf; }
.purple { fill: #9d62c0; }
.outline { fill: #fff; stroke: #5f9bd8; stroke-width: 1px; }
.tk-t { font: 700 20px "Open Sans", sans-serif; fill: #fff; }
.tk-w { font: 700 20px "Open Sans", sans-serif; fill: #fff; }
.tk-z { font: 700 16px "Open Sans", sans-serif; fill: #0068ff; letter-spacing: -.5px; }
.tk-n { font: 400 24px "Open Sans", sans-serif; fill: #000; }
```
